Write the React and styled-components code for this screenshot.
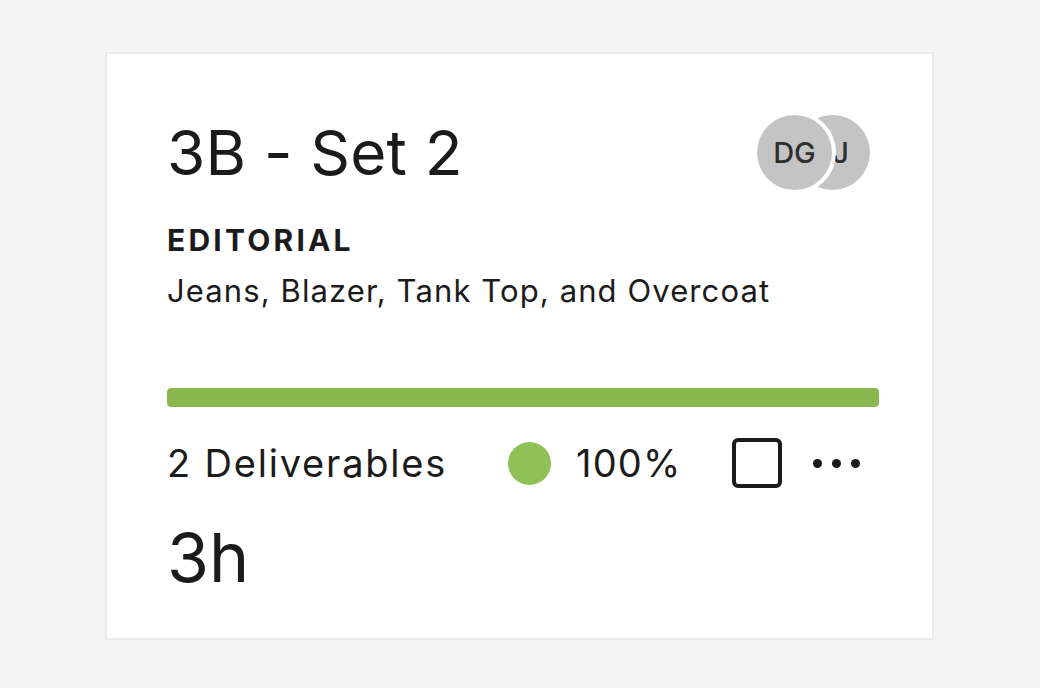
import React from "react";
import styled, { createGlobalStyle } from "styled-components";

const GlobalStyle = createGlobalStyle`
  html, body {
    margin: 0;
    padding: 0;
    background: #f4f4f4;
  }
  body {
    font-family: Inter, "Noto Sans", "Liberation Sans", sans-serif;
    color: #1b1b1b;
  }
`;

const Page = styled.div`
  padding: 52px 0 0 105px;
`;

const Card = styled.div`
  box-sizing: border-box;
  width: 829px;
  height: 588px;
  background: #fff;
  border: 2px solid #ebebeb;
  padding: 60px 53px 0 60px;
  display: flex;
  flex-direction: column;
`;

const Header = styled.div`
  display: flex;
  justify-content: space-between;
  align-items: flex-start;
  padding-right: 9px;
`;

const Title = styled.h1`
  margin: 8px 0 0;
  font-size: 62px;
  font-weight: 400;
  line-height: 1;
  letter-spacing: 0.2px;
`;

const Avatars = styled.div`
  display: flex;
  margin-top: 1px;
`;

const Avatar = styled.div`
  width: 75px;
  height: 75px;
  border-radius: 50%;
  background: #c4c4c4;
  color: #2e2e2e;
  font-size: 29px;
  font-weight: 500;
  display: flex;
  align-items: center;
  justify-content: center;
  position: relative;
  z-index: ${(p) => p.$z};
  margin-left: ${(p) => (p.$stacked ? "-37px" : "0")};
  padding-left: ${(p) => (p.$stacked ? "16px" : "0")};
  box-sizing: border-box;
  box-shadow: ${(p) => (p.$stacked ? "none" : "0 0 0 4px #fff")};
`;

const Category = styled.div`
  margin-top: 35px;
  font-size: 30px;
  font-weight: 700;
  letter-spacing: 3.2px;
  line-height: 1;
`;

const Items = styled.div`
  margin-top: 20px;
  font-size: 31px;
  letter-spacing: 1.1px;
  line-height: 1;
`;

const Progress = styled.div`
  margin-top: 82px;
  height: 19px;
  border-radius: 4px;
  background: #e6e6e6;
  overflow: hidden;
`;

const ProgressFill = styled.div`
  height: 100%;
  background: #8bb84e;
  border-radius: 4px;
`;

const Footer = styled.div`
  display: flex;
  align-items: center;
  margin-top: 31px;
  font-size: 38px;
  letter-spacing: 1.2px;
  line-height: 1;
`;

const Count = styled.span`
  width: 278px;
  white-space: nowrap;
  letter-spacing: 1.8px;
`;

const Status = styled.div`
  display: flex;
  align-items: center;
  gap: 25px;
  margin-left: 63px;
`;

const Dot = styled.span`
  width: 43px;
  height: 43px;
  border-radius: 50%;
  background: #90c157;
`;

const Percent = styled.span`
  width: 100px;
  white-space: nowrap;
`;

const Checkbox = styled.span`
  box-sizing: border-box;
  width: 50px;
  height: 50px;
  border: 4px solid #1b1b1b;
  border-radius: 6px;
  margin-left: 56px;
`;

const More = styled.div`
  display: flex;
  gap: 10px;
  margin-left: 31px;
  span {
    width: 9px;
    height: 9px;
    border-radius: 50%;
    background: #1b1b1b;
  }
`;

const Duration = styled.div`
  margin-top: 35px;
  font-size: 68px;
  line-height: 1;
`;

export default function App() {
  const done = 2;
  const total = 2;
  const pct = Math.round((done / total) * 100);
  return (
    <>
      <GlobalStyle />
      <Page>
        <Card>
          <Header>
            <Title>3B - Set 2</Title>
            <Avatars>
              <Avatar $z={2}>DG</Avatar>
              <Avatar $z={1} $stacked>
                J
              </Avatar>
            </Avatars>
          </Header>
          <Category>EDITORIAL</Category>
          <Items>Jeans, Blazer, Tank Top, and Overcoat</Items>
          <Progress>
            <ProgressFill style={{ width: `${pct}%` }} />
          </Progress>
          <Footer>
            <Count>{total} Deliverables</Count>
            <Status>
              <Dot />
              <Percent>{pct}%</Percent>
            </Status>
            <Checkbox />
            <More>
              <span />
              <span />
              <span />
            </More>
          </Footer>
          <Duration>3h</Duration>
        </Card>
      </Page>
    </>
  );
}
